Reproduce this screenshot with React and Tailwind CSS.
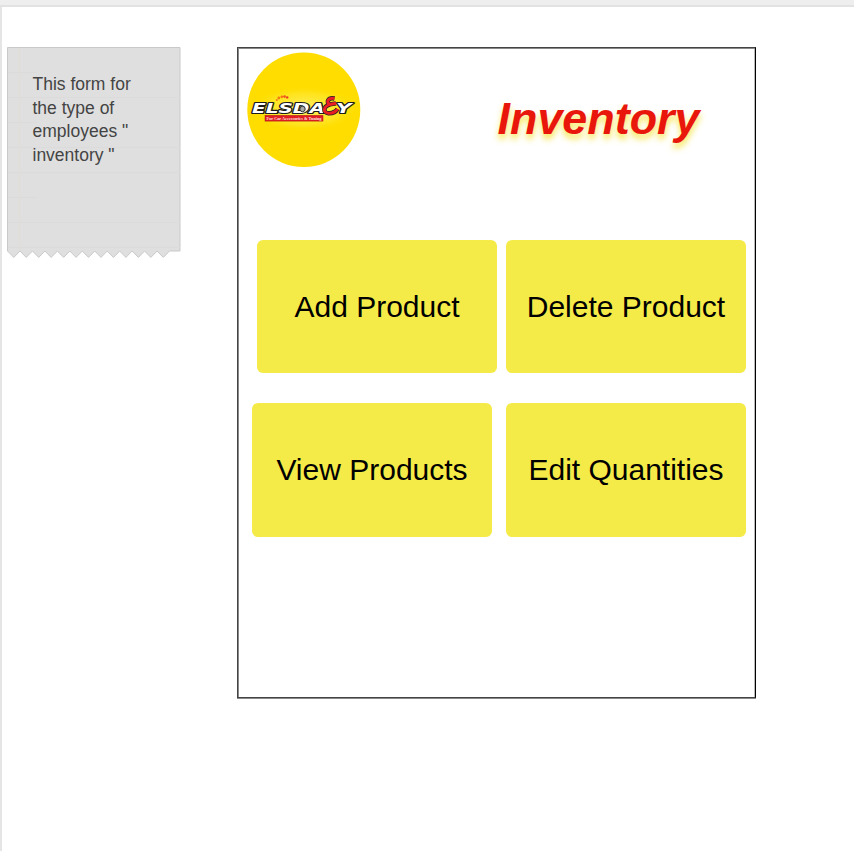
const TEETH = 13;

function notePath() {
  let d = "M0.5 0.5H173V204H162.5";
  for (let i = 0; i < TEETH; i++) {
    const x = 162.5 - i * 12.46;
    d += `L${x - 6.2} 210.4L${Math.max(0.5, x - 12.46)} 204`;
  }
  return d + "Z";
}

function StickyNote() {
  return (
    <aside className="relative ml-[7px] mt-[47px] h-[212px] w-[174px] shrink-0">
      <svg className="absolute inset-0" width="174" height="212" viewBox="0 0 174 212">
        <path d={notePath()} fill="#dfdfdf" stroke="#c9c9c9" />
        <path d="M12.5 1V203" stroke="#e3dcd5" />
        <path
          d="M1 25.5H30M1 50.5H173M1 75.5H30M1 100.5H173M1 125.5H173M1 150.5H30M1 175.5H173M1 200.5H173"
          stroke="#dbdbdb"
        />
      </svg>
      <p className="relative pl-[25.5px] pt-[25.8px] text-[17.5px] leading-[23.7px] text-[#444]">
        This form for
        <br />
        the type of
        <br />
        employees "
        <br />
        inventory "
      </p>
    </aside>
  );
}

const AIN = "M334.5 98.5C328 97 325.5 102.8 330 104.4L336 103.3M330 104.4C322.8 106.8 322.8 112.8 328.5 113.2C332.5 113.4 336 111.5 337.5 109";

function Logo() {
  return (
    <svg className="ml-[9px] mt-1 shrink-0" width="114" height="116" viewBox="247 52 114 116">
      <defs>
        <radialGradient id="glow">
          <stop offset="0" stopColor="#fff27a" stopOpacity="0.9" />
          <stop offset="0.7" stopColor="#ffe82e" stopOpacity="0.6" />
          <stop offset="1" stopColor="#ffdd00" stopOpacity="0" />
        </radialGradient>
      </defs>
      <ellipse cx="303.8" cy="109.8" rx="56.5" ry="57.3" fill="#ffdd00" />
      <ellipse cx="304" cy="109" rx="54" ry="23" fill="url(#glow)" />
      <g fill="#f47a10">
        <circle cx="276.8" cy="100" r="1" />
        <circle cx="278.8" cy="98" r="1.4" />
        <circle cx="281.8" cy="96.8" r="1.4" />
        <circle cx="284.6" cy="96.6" r="1.4" fill="#ef5520" />
        <circle cx="287.2" cy="97.4" r="1.2" fill="#e93622" />
      </g>
      <g
        fontFamily="'DejaVu Sans', sans-serif"
        fontWeight="700"
        fontStyle="italic"
        fontSize="14.8"
        fill="#fff"
        stroke="#1c1c1c"
        strokeWidth="2.2"
        strokeLinejoin="round"
        paintOrder="stroke"
      >
        <text x="252" y="113.2" textLength="73" lengthAdjust="spacingAndGlyphs">ELSDA</text>
        <text x="336" y="113.2" textLength="15.5" lengthAdjust="spacingAndGlyphs">Y</text>
      </g>
      <circle cx="302.5" cy="109" r="2.7" fill="#aaa" stroke="#333" strokeWidth="1" />
      <path d={AIN} fill="none" stroke="#222" strokeWidth="4.4" strokeLinejoin="round" />
      <path d={AIN} fill="none" stroke="#e91d24" strokeWidth="3" strokeLinejoin="round" />
      <rect x="265" y="115.3" width="58" height="5.8" fill="#e21c25" stroke="#a81f18" strokeWidth="0.5" />
      <text
        x="266.5"
        y="119.8"
        fontFamily="'Liberation Serif', serif"
        fontWeight="700"
        fontSize="4"
        fill="#ffe4dd"
        textLength="55"
        lengthAdjust="spacingAndGlyphs"
      >
        For Car Accessories &amp; Tuning
      </text>
    </svg>
  );
}

function Action({ children, className = "" }) {
  return (
    <button
      className={`h-[133.5px] w-60 shrink-0 rounded-md bg-[#f5eb48] text-[30px] leading-[34px] text-black ${className}`}
    >
      {children}
    </button>
  );
}

export default function App() {
  return (
    <div className="flex h-[851px] w-[854px] flex-col overflow-hidden bg-white font-['Liberation_Sans',Arial,sans-serif]">
      <header className="h-[7px] shrink-0 border-b-2 border-[#e2e2e2] bg-[#eee]" />
      <main className="flex flex-1 items-start border-l-2 border-[#e5e5e5]">
        <div className="-ml-[2px] -mt-[7px]">
          <StickyNote />
        </div>
        <section className="ml-14 mt-10 flex h-[651px] w-[519px] shrink-0 flex-col border border-[#444] border-r-black shadow-[0_1px_0_#888,inset_1px_1px_0_#888,inset_-1px_0_0_#bbb]">
          <div className="flex h-[191.7px] items-start">
            <Logo />
            <h1 className="ml-[136.5px] mt-[45px] text-[44.9px] font-bold italic leading-[52px] text-[#e9160c] [text-shadow:0_5px_6px_rgba(245,225,40,0.8)]">
              Inventory
            </h1>
          </div>
          <div className="flex gap-[9px] pl-[19px]">
            <Action className="pt-px">Add Product</Action>
            <Action className="pt-px">Delete Product</Action>
          </div>
          <div className="mt-[30px] flex gap-[14px] pl-[14px]">
            <Action>View Products</Action>
            <Action>Edit Quantities</Action>
          </div>
        </section>
      </main>
    </div>
  );
}
